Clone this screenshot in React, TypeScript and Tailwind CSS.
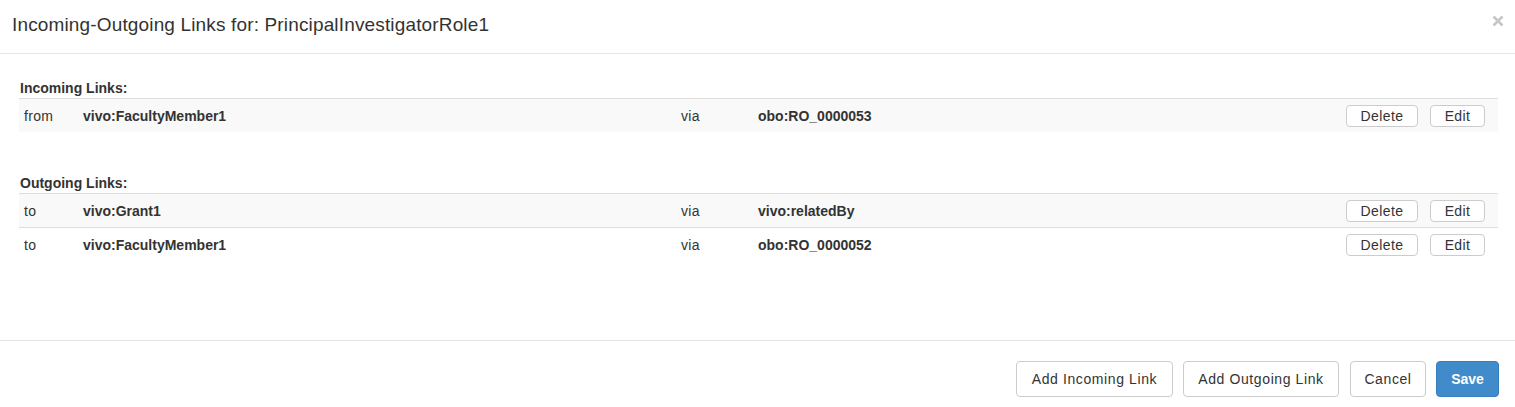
type Link = { dir: string; node: string; prop: string };

const incoming: Link[] = [{ dir: "from", node: "vivo:FacultyMember1", prop: "obo:RO_0000053" }];

const outgoing: Link[] = [
  { dir: "to", node: "vivo:Grant1", prop: "vivo:relatedBy" },
  { dir: "to", node: "vivo:FacultyMember1", prop: "obo:RO_0000052" },
];

function SmallButton({ label, width }: { label: string; width: string }) {
  return (
    <button
      className={`${width} h-[22px] rounded-[4px] border border-[#cccccc] bg-white text-[14px] leading-[20px] tracking-[0.4px] text-[#333]`}
    >
      {label}
    </button>
  );
}

function LinkTable({ title, rows }: { title: string; rows: Link[] }) {
  return (
    <section>
      <h5 className="font-bold leading-[20px] pl-[1px]">{title}</h5>
      <div>
        {rows.map((r, i) => (
          <div
            key={i}
            className={`h-[34px] border-t border-[#dddddd] grid grid-cols-[59px_598px_77px_1fr_auto] items-center ${
              i % 2 === 0 ? "bg-[#f9f9f9]" : "bg-white"
            }`}
          >
            <span className="pl-[5px] tracking-[0.3px]">{r.dir}</span>
            <span className="pl-[5px] font-bold">{r.node}</span>
            <span className="pl-[5px] tracking-[0.3px]">via</span>
            <span className="pl-[5px] font-bold">{r.prop}</span>
            <div className="flex items-center gap-[12px] pr-[13px]">
              <SmallButton label="Delete" width="w-[72px]" />
              <SmallButton label="Edit" width="w-[55px]" />
            </div>
          </div>
        ))}
      </div>
    </section>
  );
}

export default function App() {
  return (
    <div className="w-[1515px] h-[407px] bg-white text-[#333] font-['Liberation_Sans',Arial,sans-serif] text-[14px] leading-[20px] flex flex-col">
      <header className="h-[54px] shrink-0 border-b border-[#e5e5e5] flex items-start justify-between pl-[12px] pr-[11px]">
        <h4 className="text-[19px] leading-[26px] mt-[12px] tracking-[0.15px]">
          Incoming-Outgoing Links for: PrincipalInvestigatorRole1
        </h4>
        <button className="mt-[15px] w-[12px] h-[12px]" aria-label="Close">
          <svg width="12" height="12" viewBox="0 0 12 12">
            <path d="M1.5 1.5 L10.5 10.5 M10.5 1.5 L1.5 10.5" stroke="#c6c6c6" strokeWidth="2.6" strokeLinecap="butt" />
          </svg>
        </button>
      </header>

      <main className="flex-1 pt-[24px] pl-[19px] pr-[17px] flex flex-col gap-[41px]">
        <LinkTable title="Incoming Links:" rows={incoming} />
        <LinkTable title="Outgoing Links:" rows={outgoing} />
      </main>

      <footer className="h-[67px] shrink-0 border-t border-[#e5e5e5] flex items-start justify-end pt-[20px] pr-[16px] gap-[10px] tracking-[0.6px]">
        <button className="w-[157px] h-[36px] rounded-[4px] border border-[#cccccc] bg-white">Add Incoming Link</button>
        <button className="w-[156px] h-[36px] rounded-[4px] border border-[#cccccc] bg-white mr-[1px]">Add Outgoing Link</button>
        <button className="w-[76px] h-[36px] rounded-[4px] border border-[#cccccc] bg-white">Cancel</button>
        <button className="w-[63px] h-[36px] rounded-[4px] border border-[#357ebd] bg-[#428bca] text-white font-bold tracking-normal">Save</button>
      </footer>
    </div>
  );
}
